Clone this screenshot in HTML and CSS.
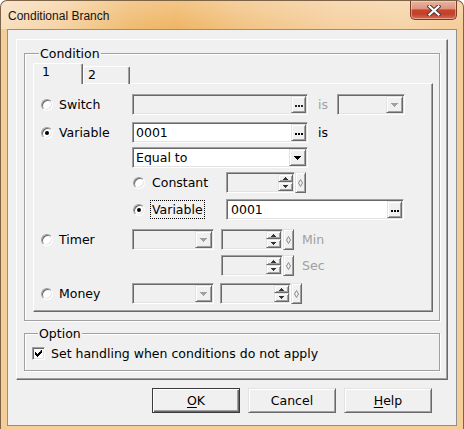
FILE: index.html
```html
<!DOCTYPE html>
<html>
<head>
<meta charset="utf-8">
<title>Conditional Branch</title>
<link rel="stylesheet" href="styles.css">
</head>
<body>
<div class="window">
  <div class="titlebar">
    <span class="title">Conditional Branch</span>
    <div class="close">
      <svg width="14" height="11" viewBox="0 0 14 11"><path d="M2.5 1.5 L11.5 9.5 M11.5 1.5 L2.5 9.5" stroke="#4a3a38" stroke-width="4.2" stroke-linecap="square"/><path d="M2.5 1.5 L11.5 9.5 M11.5 1.5 L2.5 9.5" stroke="#fff" stroke-width="2.2" stroke-linecap="square"/></svg>
    </div>
  </div>
  <div class="client">
    <div class="panel">
      <div class="group cond">
        <span class="legend">Condition</span>
        <div class="tabs">
          <div class="tab active">1</div>
          <div class="tab">2</div>
        </div>
        <div class="page">
          <!-- Switch -->
          <div class="row">
            <div class="lead"><span class="radio"></span><span class="lbl">Switch</span></div>
            <div class="sunk box w176">
              <span class="val"></span>
              <span class="raised dots"><svg width="8" height="2" viewBox="0 0 8 2"><rect x="0" width="2" height="2" fill="#222"/><rect x="3" width="2" height="2" fill="#222"/><rect x="6" width="2" height="2" fill="#222"/></svg></span>
            </div>
            <span class="is dim">is</span>
            <div class="sunk box w68">
              <span class="val"></span>
              <span class="raised drop"><svg width="7" height="4" viewBox="0 0 7 4"><path d="M0 0h7v1h-1v1h-1v1h-1v1h-1v-1h-1v-1h-1v-1h-1z" fill="#a0a0a0"/></svg></span>
            </div>
          </div>
          <!-- Variable -->
          <div class="row">
            <div class="lead"><span class="radio on"></span><span class="lbl">Variable</span></div>
            <div class="sunk box white w176">
              <span class="val">0001</span>
              <span class="raised dots"><svg width="8" height="2" viewBox="0 0 8 2"><rect x="0" width="2" height="2" fill="#000"/><rect x="3" width="2" height="2" fill="#000"/><rect x="6" width="2" height="2" fill="#000"/></svg></span>
            </div>
            <span class="is">is</span>
          </div>
          <!-- Equal to -->
          <div class="row">
            <div class="lead"></div>
            <div class="sunk box white w176">
              <span class="val">Equal to</span>
              <span class="raised drop"><svg width="7" height="4" viewBox="0 0 7 4"><path d="M0 0h7v1h-1v1h-1v1h-1v1h-1v-1h-1v-1h-1v-1h-1z" fill="#000"/></svg></span>
            </div>
          </div>
          <!-- Constant -->
          <div class="row">
            <div class="sub"><span class="radio"></span><span class="lbl">Constant</span></div>
            <div class="spin w80">
              <div class="sunk edit">
                <div class="ud">
                  <span class="raised"><svg width="5" height="3" viewBox="0 0 5 3"><path d="M2 0h1v1h1v1h1v1h-5v-1h1v-1h1z" fill="#333"/></svg></span>
                  <span class="raised"><svg width="5" height="3" viewBox="0 0 5 3"><path d="M0 0h5v1h-1v1h-1v1h-1v-1h-1v-1h-1z" fill="#333"/></svg></span>
                </div>
              </div>
              <span class="raised dia"><svg width="5" height="8" viewBox="0 0 5 8"><path d="M2.5 0.5 L4.5 4 L2.5 7.5 L0.5 4 Z" fill="none" stroke="#8a8a8a" stroke-width="1"/></svg></span>
            </div>
          </div>
          <!-- Variable (sub) -->
          <div class="row">
            <div class="sub"><span class="radio on"></span><span class="focus">Variable</span></div>
            <div class="sunk box white w178">
              <span class="val v2">0001</span>
              <span class="raised dots"><svg width="8" height="2" viewBox="0 0 8 2"><rect x="0" width="2" height="2" fill="#000"/><rect x="3" width="2" height="2" fill="#000"/><rect x="6" width="2" height="2" fill="#000"/></svg></span>
            </div>
          </div>
          <!-- Timer -->
          <div class="row">
            <div class="lead"><span class="radio"></span><span class="lbl">Timer</span></div>
            <div class="sunk box w82">
              <span class="val"></span>
              <span class="raised drop"><svg width="7" height="4" viewBox="0 0 7 4"><path d="M0 0h7v1h-1v1h-1v1h-1v1h-1v-1h-1v-1h-1v-1h-1z" fill="#a0a0a0"/></svg></span>
            </div>
            <div class="spin w73 gap7">
              <div class="sunk edit">
                <div class="ud">
                  <span class="raised"><svg width="5" height="3" viewBox="0 0 5 3"><path d="M2 0h1v1h1v1h1v1h-5v-1h1v-1h1z" fill="#333"/></svg></span>
                  <span class="raised"><svg width="5" height="3" viewBox="0 0 5 3"><path d="M0 0h5v1h-1v1h-1v1h-1v-1h-1v-1h-1z" fill="#333"/></svg></span>
                </div>
              </div>
              <span class="raised dia"><svg width="5" height="8" viewBox="0 0 5 8"><path d="M2.5 0.5 L4.5 4 L2.5 7.5 L0.5 4 Z" fill="none" stroke="#8a8a8a" stroke-width="1"/></svg></span>
            </div>
            <span class="unit dim">Min</span>
          </div>
          <!-- Sec -->
          <div class="row">
            <div class="spin w73 indent-sec">
              <div class="sunk edit">
                <div class="ud">
                  <span class="raised"><svg width="5" height="3" viewBox="0 0 5 3"><path d="M2 0h1v1h1v1h1v1h-5v-1h1v-1h1z" fill="#333"/></svg></span>
                  <span class="raised"><svg width="5" height="3" viewBox="0 0 5 3"><path d="M0 0h5v1h-1v1h-1v1h-1v-1h-1v-1h-1z" fill="#333"/></svg></span>
                </div>
              </div>
              <span class="raised dia"><svg width="5" height="8" viewBox="0 0 5 8"><path d="M2.5 0.5 L4.5 4 L2.5 7.5 L0.5 4 Z" fill="none" stroke="#8a8a8a" stroke-width="1"/></svg></span>
            </div>
            <span class="unit dim">Sec</span>
          </div>
          <!-- Money -->
          <div class="row">
            <div class="lead"><span class="radio"></span><span class="lbl">Money</span></div>
            <div class="sunk box w82">
              <span class="val"></span>
              <span class="raised drop"><svg width="7" height="4" viewBox="0 0 7 4"><path d="M0 0h7v1h-1v1h-1v1h-1v1h-1v-1h-1v-1h-1v-1h-1z" fill="#a0a0a0"/></svg></span>
            </div>
            <div class="spin w82 gap6">
              <div class="sunk edit">
                <div class="ud">
                  <span class="raised"><svg width="5" height="3" viewBox="0 0 5 3"><path d="M2 0h1v1h1v1h1v1h-5v-1h1v-1h1z" fill="#333"/></svg></span>
                  <span class="raised"><svg width="5" height="3" viewBox="0 0 5 3"><path d="M0 0h5v1h-1v1h-1v1h-1v-1h-1v-1h-1z" fill="#333"/></svg></span>
                </div>
              </div>
              <span class="raised dia"><svg width="5" height="8" viewBox="0 0 5 8"><path d="M2.5 0.5 L4.5 4 L2.5 7.5 L0.5 4 Z" fill="none" stroke="#8a8a8a" stroke-width="1"/></svg></span>
            </div>
          </div>
        </div>
      </div>
      <div class="group opt">
        <span class="legend">Option</span>
        <div class="optrow">
          <span class="sunk check"><svg width="7" height="7" viewBox="0 0 7 7"><path d="M6 0h1v3h-1v1h-1v1h-1v1h-1v1h-1v-1h-1v-1h-1v-3h1v1h1v1h1v-1h1v-1h1z" fill="#000"/></svg></span>
          <span class="optlbl">Set handling when conditions do not apply</span>
        </div>
      </div>
    </div>
    <div class="buttons">
      <div class="btn def"><span><u>O</u>K</span></div>
      <div class="btn">Cancel</div>
      <div class="btn"><span><u>H</u>elp</span></div>
    </div>
  </div>
</div>
</body>
</html>
```
FILE: styles.css
```css
* { box-sizing: border-box; }

body {
  margin: 0;
  background: #ffffff;
  font-family: "DejaVu Sans", sans-serif;
  font-size: 12.5px;
  color: #000;
}

.window {
  width: 464px;
  height: 429px;
  border: 1px solid #7e6446;
  border-bottom: 0;
  border-radius: 7px 7px 0 0;
  padding-bottom: 3px;
  display: flex;
  flex-direction: column;
  overflow: hidden;
  background:
    linear-gradient(180deg, rgba(255,255,255,0.22), rgba(255,255,255,0) 28px) top / 100% 28px no-repeat,
    linear-gradient(90deg, #f8dfbf 0%, #f6d4a8 12%, #f0bb70 28%, #efb565 38%, #f2c383 52%, #f5cf9f 72%, #f6d3a6 88%, #f4cc96 100%) top / 100% 28px no-repeat,
    #f4cd98;
}

.titlebar {
  height: 28px;
  flex: none;
  display: flex;
  align-items: flex-start;
}

.title {
  font-family: "Liberation Sans", Arial, sans-serif;
  font-size: 12px;
  line-height: 14px;
  margin: 8px 0 0 7px;
  color: #141414;
}

.close {
  margin-left: auto;
  margin-right: 6px;
  width: 47px;
  height: 19px;
  border: 1px solid #7a3a2c;
  border-top: 0;
  border-radius: 0 0 5px 5px;
  background: linear-gradient(180deg, #eab3a2 0%, #df957f 42%, #c9452c 50%, #c2402a 72%, #d56c52 100%);
  box-shadow: inset 0 0 0 1px rgba(255, 230, 220, 0.45);
  display: flex;
  align-items: center;
  justify-content: center;
}

.client {
  flex: 1;
  margin: 0 6px;
  border: 1px solid #8f8f8f;
  background: #f0f0f0;
  padding: 9px 8px 0 8px;
}

.panel {
  border: 1px solid;
  border-color: #fff #696969 #696969 #fff;
  box-shadow: inset -1px -1px 0 #a0a0a0;
  padding: 13px 7px 8px 7px;
}

.group {
  border: 1px solid #a0a0a0;
  box-shadow: 1px 1px 0 #fff, inset 1px 1px 0 #fff;
}

.legend {
  display: block;
  width: fit-content;
  height: 15px;
  line-height: 15px;
  margin: -8px 0 0 6px;
  padding: 0 1px;
  background: #f0f0f0;
}

.cond {
  padding: 0 6px 8px 8px;
}

.tabs {
  display: flex;
  align-items: flex-end;
  height: 21px;
  margin-top: 2px;
  margin-bottom: -1px;
}

.tab {
  width: 47px;
  height: 18px;
  border: 1px solid;
  border-color: #fff #696969 transparent #fff;
  border-bottom: 0;
  border-radius: 2px 2px 0 0;
  box-shadow: inset -1px 0 0 #a0a0a0;
  padding-left: 4px;
  line-height: 16px;
}

.tab.active {
  width: 50px;
  height: 21px;
  padding-left: 8px;
  position: relative;
  z-index: 1;
  background: #f0f0f0;
}

.page {
  border: 1px solid;
  border-color: #fff #696969 #696969 #fff;
  box-shadow: inset -1px -1px 0 #a0a0a0;
  padding: 10px 0 7px 7px;
  display: grid;
  grid-template-rows: 28px 25px 25px 27px 30px 26px 28px 21px;
}

.row {
  display: flex;
  align-items: center;
  height: 21px;
}

.lead {
  width: 91px;
  flex: none;
  display: flex;
  align-items: center;
}

.lead .lbl { margin-left: 6px; }

.sub {
  margin-left: 92px;
  width: 93px;
  flex: none;
  display: flex;
  align-items: center;
}

.sub .lbl { margin-left: 7px; }

.focus {
  margin-left: 5px;
  border: 1px dotted #000;
  padding: 0 1px;
  line-height: 17px;
}

.radio {
  width: 12px;
  height: 12px;
  flex: none;
  border-radius: 50%;
  border: 1px solid;
  border-color: #a0a0a0 #fff #fff #a0a0a0;
  box-shadow: inset 1px 1px 0 #696969, inset -1px -1px 0 #e3e3e3;
  background: #fff;
  display: flex;
  align-items: center;
  justify-content: center;
}

.radio.on::after {
  content: "";
  width: 4px;
  height: 4px;
  border-radius: 50%;
  background: #000;
}

.sunk {
  border: 1px solid;
  border-color: #a0a0a0 #fff #fff #a0a0a0;
  box-shadow: inset 1px 1px 0 #696969, inset -1px -1px 0 #e3e3e3;
  padding: 1px;
  background: #f0f0f0;
}

.raised {
  border: 1px solid;
  border-color: #e3e3e3 #696969 #696969 #e3e3e3;
  box-shadow: inset 1px 1px 0 #fff, inset -1px -1px 0 #a0a0a0;
  background: #f0f0f0;
  display: flex;
  align-items: center;
  justify-content: center;
}

.box {
  height: 21px;
  flex: none;
  display: flex;
}

.box.white { background: #fff; }

.w176 { width: 176px; }
.w178 { width: 178px; }
.w68 { width: 68px; }
.w82 { width: 82px; }
.w80 { width: 80px; }
.w73 { width: 73px; }

.val {
  flex: 1;
  line-height: 17px;
  padding-left: 2px;
  white-space: nowrap;
}

.val.v2 { padding-left: 3px; }

.dots {
  width: 15px;
  padding-top: 3px;
}

.drop {
  width: 17px;
}

.is {
  width: 19px;
  margin-left: 10px;
  flex: none;
}

.dim { color: #a0a0a0; }

.spin {
  height: 21px;
  flex: none;
  display: flex;
}

.gap7 { margin-left: 7px; }
.gap6 { margin-left: 6px; }
.indent-sec { margin-left: 180px; }

.edit {
  flex: 1;
  display: flex;
  justify-content: flex-end;
}

.ud {
  width: 15px;
  display: flex;
  flex-direction: column;
}

.ud .raised { height: 8px; }
.ud .raised + .raised { height: 9px; }

.dia {
  width: 11px;
  flex: none;
}

.unit { margin-left: 8px; }

.opt {
  margin-top: 12px;
  padding: 0 6px 9px 7px;
}

.optrow {
  display: flex;
  align-items: center;
  height: 16px;
  margin-top: 4px;
}

.check {
  width: 13px;
  height: 13px;
  flex: none;
  background: #fff;
  display: flex;
  align-items: center;
  justify-content: center;
}

.optlbl { margin-left: 6px; }

.buttons {
  display: flex;
  justify-content: flex-end;
  gap: 8px;
  margin: 8px 16px 0 0;
}

.btn {
  width: 88px;
  height: 25px;
  border: 1px solid;
  border-color: #e3e3e3 #696969 #696969 #e3e3e3;
  box-shadow: inset 1px 1px 0 #fff, inset -1px -1px 0 #a0a0a0;
  background: #f0f0f0;
  display: flex;
  align-items: center;
  justify-content: center;
}

.btn.def {
  border-color: #3a3a3a;
  box-shadow: inset 1px 1px 0 #fff, inset -1px -1px 0 #696969, inset -2px -2px 0 #a0a0a0;
}

.btn u { text-decoration-thickness: 1px; text-underline-offset: 2px; }
```
